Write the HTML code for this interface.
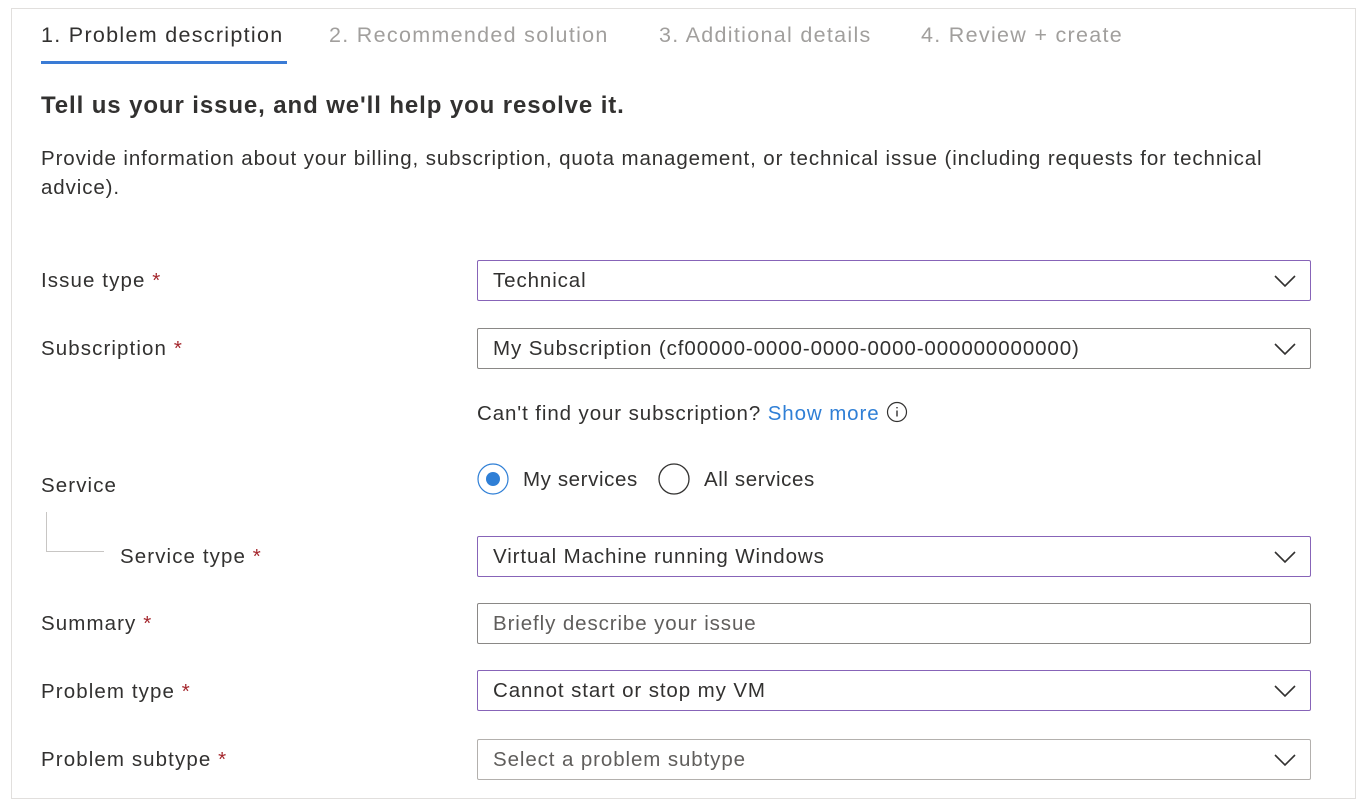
<!DOCTYPE html>
<html><head><meta charset="utf-8"><style>
body{margin:0;width:1368px;height:810px;background:#fff;font-family:"Liberation Sans",sans-serif;color:#323130;position:relative;overflow:hidden}
.frame{position:absolute;left:11px;top:8px;width:1343px;height:789px;border:1px solid #e1dfdd}
.a{position:absolute;white-space:nowrap}
.tab{font-size:21.5px;letter-spacing:1.3px;top:23px;color:#a19f9d}
.lbl{font-size:20.5px;letter-spacing:1.1px;left:41px}
.req{color:#a4262c}
.box{position:absolute;left:477px;border:1px solid #8a8886;border-radius:2px;font-size:20.5px;letter-spacing:0.9px;line-height:40px;padding-left:15px;box-sizing:border-box;width:834px;height:41px}
.p{border-color:#8764b8}
.g{border-color:#b3b0ad}
.chev{position:absolute;right:14px;top:13px}
</style></head><body>
<div class="frame"></div>
<div class="a tab" style="left:41px;color:#323130">1. Problem description</div>
<div class="a" style="left:41px;top:61px;width:246px;height:3px;background:#3a7bd5"></div>
<div class="a tab" style="left:329px">2. Recommended solution</div>
<div class="a tab" style="left:659px">3. Additional details</div>
<div class="a tab" style="left:921px">4. Review + create</div>
<div class="a" style="left:41px;top:92px;font-size:24px;letter-spacing:0.9px;font-weight:bold;color:#323130">Tell us your issue, and we'll help you resolve it.</div>
<div class="a" style="left:41px;top:144px;font-size:20.5px;letter-spacing:0.9px;line-height:29px;white-space:normal;width:1250px">Provide information about your billing, subscription, quota management, or technical issue (including requests for technical advice).</div>

<div class="a lbl" style="top:269px">Issue type <span class="req">*</span></div>
<div class="box p" style="top:260px">Technical<svg class="chev" width="22" height="14"><path d="M1 2l10 10 10-10" fill="none" stroke="#323130" stroke-width="1.6"/></svg></div>
<div class="a lbl" style="top:337px">Subscription <span class="req">*</span></div>
<div class="box" style="top:328px">My Subscription (cf00000-0000-0000-0000-000000000000)<svg class="chev" width="22" height="14"><path d="M1 2l10 10 10-10" fill="none" stroke="#323130" stroke-width="1.6"/></svg></div>
<div class="a" style="left:477px;top:401px;font-size:20.5px;letter-spacing:0.9px">Can't find your subscription? <span style="color:#2f7fd6">Show more</span> <svg width="22" height="22" style="vertical-align:-3px"><circle cx="11" cy="11" r="9.5" fill="none" stroke="#323130" stroke-width="1.2"/><path d="M11 9.5v6M11 6v1.4" stroke="#323130" stroke-width="1.4"/></svg></div>
<div class="a lbl" style="top:474px">Service</div>
<svg class="a" style="left:477px;top:463px" width="34" height="34"><circle cx="16" cy="16" r="15" fill="none" stroke="#2f7fd6" stroke-width="1.2"/><circle cx="16" cy="16" r="7" fill="#2f7fd6"/></svg>
<div class="a" style="left:523px;top:468px;font-size:20.5px;letter-spacing:0.6px">My services</div>
<svg class="a" style="left:658px;top:463px" width="34" height="34"><circle cx="16" cy="16" r="15" fill="none" stroke="#323130" stroke-width="1.3"/></svg>
<div class="a" style="left:704px;top:468px;font-size:20.5px;letter-spacing:0.6px">All services</div>
<div class="a" style="left:46px;top:512px;width:57px;height:39px;border-left:1px solid #c8c6c4;border-bottom:1px solid #c8c6c4"></div>
<div class="a" style="left:120px;top:545px;font-size:20.5px;letter-spacing:1.1px">Service type <span class="req">*</span></div>
<div class="box p" style="top:536px">Virtual Machine running Windows<svg class="chev" width="22" height="14"><path d="M1 2l10 10 10-10" fill="none" stroke="#323130" stroke-width="1.6"/></svg></div>
<div class="a lbl" style="top:612px">Summary <span class="req">*</span></div>
<div class="box" style="top:603px;color:#605e5c">Briefly describe your issue</div>
<div class="a lbl" style="top:680px">Problem type <span class="req">*</span></div>
<div class="box p" style="top:670px">Cannot start or stop my VM<svg class="chev" width="22" height="14"><path d="M1 2l10 10 10-10" fill="none" stroke="#323130" stroke-width="1.6"/></svg></div>
<div class="a lbl" style="top:748px">Problem subtype <span class="req">*</span></div>
<div class="box g" style="top:739px;color:#605e5c">Select a problem subtype<svg class="chev" width="22" height="14"><path d="M1 2l10 10 10-10" fill="none" stroke="#323130" stroke-width="1.6"/></svg></div>
</body></html>
